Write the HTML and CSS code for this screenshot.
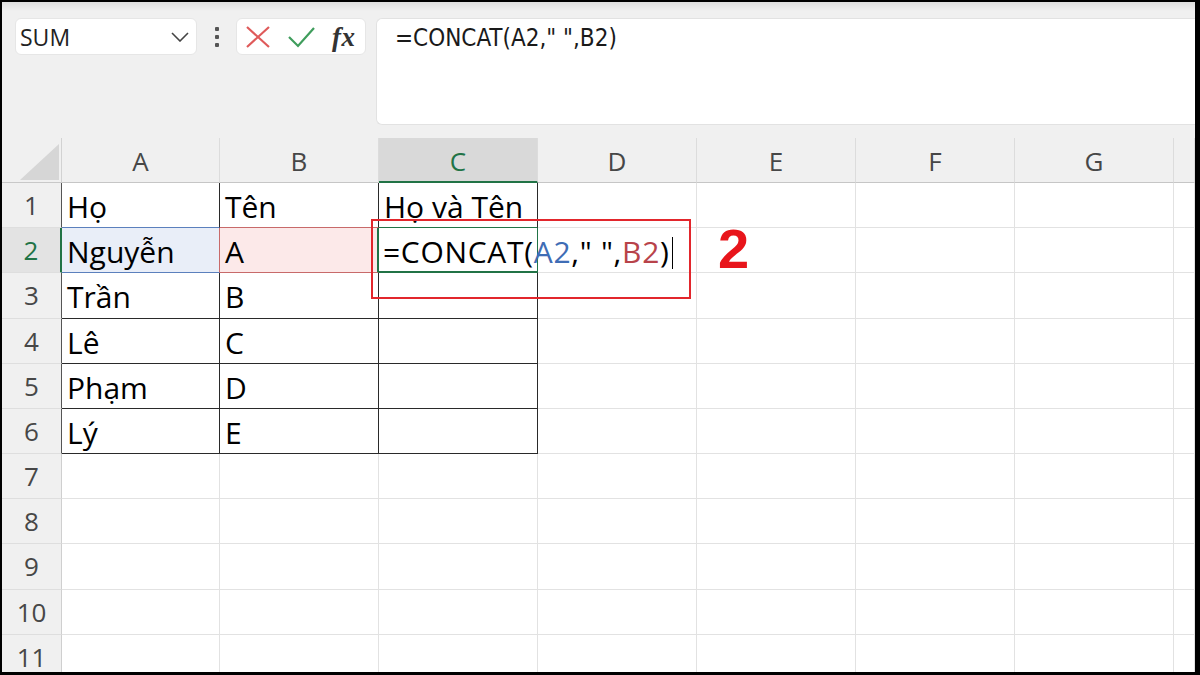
FILE: index.html
```html
<!DOCTYPE html>
<html lang="vi">
<head>
<meta charset="utf-8">
<title>Excel CONCAT</title>
<link rel="stylesheet" href="styles.css">
</head>
<body>
<div class="app">
  <div class="top">
    <div class="namebox">
      <span>SUM</span>
      <svg class="chev" width="18" height="10" viewBox="0 0 18 10"><polyline points="1,1 9,9 17,1" fill="none" stroke="#444" stroke-width="1.6"/></svg>
    </div>
    <div class="more"><i></i><i></i><i></i></div>
    <div class="btns">
      <svg class="ico" width="26" height="22" viewBox="0 0 26 22"><path d="M2 1 L24 21 M24 1 L2 21" stroke="#df5a5a" stroke-width="2.2" fill="none"/></svg>
      <svg class="ico chk" width="27" height="22" viewBox="0 0 27 22"><polyline points="1,11 10,20 26,2" stroke="#3f9d5c" stroke-width="2.2" fill="none"/></svg>
      <span class="fx">fx</span>
    </div>
    <div class="fbar">=CONCAT(A2," ",B2)</div>
  </div>
  <div class="sheet">
    <div class="corner"><svg width="60" height="45" viewBox="0 0 60 45"><polygon points="18,42 57,42 57,6" fill="#d6d6d6"/></svg></div>
    <div class="ch">A</div><div class="ch">B</div><div class="ch sel">C</div><div class="ch">D</div><div class="ch">E</div><div class="ch">F</div><div class="ch">G</div><div class="ch"></div>

    <div class="rh dk">1</div><div class="c d a1">Họ</div><div class="c d b1">Tên</div><div class="c d c1">Họ và Tên</div><div class="c"></div><div class="c"></div><div class="c"></div><div class="c"></div><div class="c"></div>

    <div class="rh sel">2</div><div class="c d a2">Nguyễn</div><div class="c d b2">A</div><div class="c d c2">=CONCAT(<span class="ra">A2</span>," ",<span class="rb">B2</span>)<span class="caret"></span></div><div class="c"></div><div class="c"></div><div class="c"></div><div class="c"></div><div class="c"></div>

    <div class="rh dk">3</div><div class="c d">Trần</div><div class="c d">B</div><div class="c d"></div><div class="c"></div><div class="c"></div><div class="c"></div><div class="c"></div><div class="c"></div>

    <div class="rh dk">4</div><div class="c d">Lê</div><div class="c d">C</div><div class="c d"></div><div class="c"></div><div class="c"></div><div class="c"></div><div class="c"></div><div class="c"></div>

    <div class="rh dk">5</div><div class="c d">Phạm</div><div class="c d">D</div><div class="c d"></div><div class="c"></div><div class="c"></div><div class="c"></div><div class="c"></div><div class="c"></div>

    <div class="rh dk">6</div><div class="c d">Lý</div><div class="c d">E</div><div class="c d"></div><div class="c"></div><div class="c"></div><div class="c"></div><div class="c"></div><div class="c"></div>

    <div class="rh">7</div><div class="c"></div><div class="c"></div><div class="c"></div><div class="c"></div><div class="c"></div><div class="c"></div><div class="c"></div><div class="c"></div>

    <div class="rh">8</div><div class="c"></div><div class="c"></div><div class="c"></div><div class="c"></div><div class="c"></div><div class="c"></div><div class="c"></div><div class="c"></div>

    <div class="rh">9</div><div class="c"></div><div class="c"></div><div class="c"></div><div class="c"></div><div class="c"></div><div class="c"></div><div class="c"></div><div class="c"></div>

    <div class="rh">10</div><div class="c"></div><div class="c"></div><div class="c"></div><div class="c"></div><div class="c"></div><div class="c"></div><div class="c"></div><div class="c"></div>

    <div class="rh">11</div><div class="c"></div><div class="c"></div><div class="c"></div><div class="c"></div><div class="c"></div><div class="c"></div><div class="c"></div><div class="c"></div>
  </div>
  <div class="mark-box"></div>
  <div class="mark-num">2</div>
</div>
</body>
</html>
```
FILE: styles.css
```css
html, body {
  margin: 0;
  padding: 0;
  background: #000;
}
.app {
  position: relative;
  margin: 2px 5px 0 2px;
  height: 670px;
  background: #f0f0f0;
  display: flex;
  flex-direction: column;
  overflow: hidden;
  font-family: "Open Sans", "Noto Sans", sans-serif;
}
.top {
  flex: none;
  height: 136px;
  box-sizing: border-box;
  display: flex;
  align-items: flex-start;
  padding: 16px 0 0 13px;
  background: linear-gradient(#dedede, #f0f0f0 9px);
}
.namebox {
  width: 182px;
  height: 37px;
  box-sizing: border-box;
  background: #fff;
  border: 1px solid #e6e6e6;
  border-radius: 6px;
  display: flex;
  align-items: center;
  justify-content: space-between;
  padding: 0 7px 0 4px;
  font-size: 23px;
  color: #222;
}
.chev { display: block; }
.more {
  width: 39px;
  display: flex;
  flex-direction: column;
  align-items: center;
  gap: 4px;
  padding-top: 9px;
}
.more i {
  display: block;
  width: 4px;
  height: 4px;
  background: #555;
  border-radius: 1px;
}
.btns {
  width: 130px;
  height: 37px;
  box-sizing: border-box;
  background: #fff;
  border: 1px solid #e6e6e6;
  border-radius: 6px;
  display: flex;
  align-items: center;
  padding-left: 8px;
}
.ico { display: block; }
.chk { margin-left: 17px; }
.fx {
  margin-left: 17px;
  font-family: "Liberation Serif", "DejaVu Serif", serif;
  font-style: italic;
  font-weight: bold;
  font-size: 27px;
  color: #333;
  line-height: 30px;
  letter-spacing: 0.5px;
}
.fbar {
  flex: 1;
  margin-left: 10px;
  height: 107px;
  box-sizing: border-box;
  background: #fff;
  border: 1px solid #e2e2e2;
  border-right: none;
  border-radius: 6px 0 0 6px;
  padding: 4px 0 0 18px;
  font-family: "Liberation Sans Narrow", "DejaVu Sans Condensed", "Liberation Sans", sans-serif;
  font-size: 24px;
  line-height: 30px;
  color: #1a1a1a;
}
.sheet {
  flex: 1;
  background: #fff;
  display: grid;
  grid-template-columns: 60px 158px repeat(6, 159px) 1fr;
  grid-template-rows: 45px 45px 45px 46px 45px 45px 45px 45px 45px 46px 45px 1fr;
}
.corner {
  background: #f0f0f0;
  border-right: 1px solid #d2d2d2;
  border-bottom: 1px solid #c8c8c8;
  box-sizing: border-box;
}
.corner svg { display: block; }
.ch {
  background: #f0f0f0;
  border-right: 1px solid #dcdcdc;
  border-bottom: 1px solid #c6c6c6;
  box-sizing: border-box;
  text-align: center;
  font-size: 26px;
  line-height: 47px;
  color: #474747;
}
.ch.sel {
  background: #d9d9d9;
  color: #217346;
  border-bottom: 2px solid #217346;
}
.rh {
  background: #f0f0f0;
  border-right: 1px solid #cfcfcf;
  border-bottom: 1px solid #dedede;
  box-sizing: border-box;
  text-align: center;
  font-size: 26px;
  line-height: 45px;
  color: #474747;
}
.rh.dk { border-right-color: #555; }
.rh.sel {
  background: #e3e3e3;
  color: #217346;
  border-right: 2px solid #217346;
}
.c {
  border-right: 1px solid #e2e2e2;
  border-bottom: 1px solid #e2e2e2;
  box-sizing: border-box;
  padding-left: 5px;
  font-size: 30px;
  line-height: 47px;
  white-space: nowrap;
  color: #000;
}
.c.d {
  border-right-color: #2a2a2a;
  border-bottom-color: #2a2a2a;
}
.c.a1 { border-bottom-color: #5b80bd; }
.c.b1 { border-bottom-color: #c86a6a; }
.c.c1 { border-bottom-color: #217346; }
.c.a2 {
  background: #e9eef8;
  border-bottom-color: #5b80bd;
  border-right-color: #c86a6a;
}
.c.b2 {
  background: #fce9e9;
  border-bottom-color: #c86a6a;
  border-right-color: #217346;
  border-right-width: 2px;
}
.c.c2 {
  border-bottom: 2px solid #217346;
  border-right-color: #217346;
  padding-left: 4px;
  letter-spacing: 0.7px;
}
.ra { color: #3f6db5; }
.rb { color: #b8434a; }
.caret {
  display: inline-block;
  width: 1px;
  height: 32px;
  background: #000;
  margin-left: 2px;
  vertical-align: -6px;
}
.mark-box {
  position: absolute;
  left: 369px;
  top: 217px;
  width: 320px;
  height: 80px;
  box-sizing: border-box;
  border: 2px solid #e2262c;
}
.mark-num {
  position: absolute;
  left: 716px;
  top: 219px;
  font-family: "Liberation Sans", Arial, sans-serif;
  font-weight: bold;
  font-size: 56px;
  line-height: 1;
  color: #e8151b;
}
```
